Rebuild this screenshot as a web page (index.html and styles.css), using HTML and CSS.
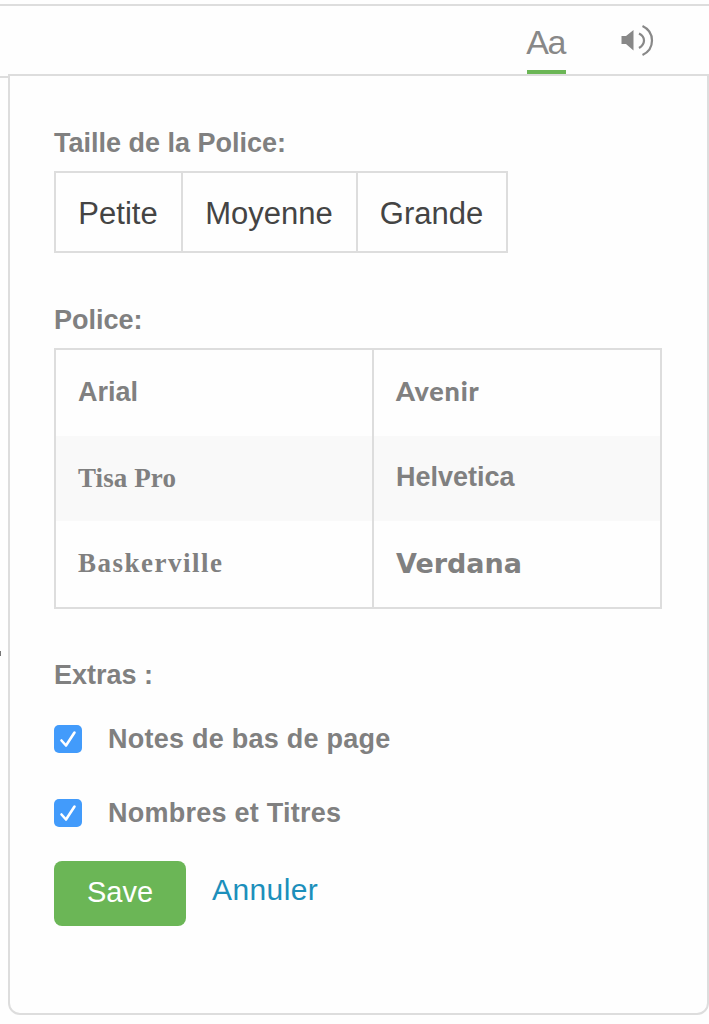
FILE: index.html
```html
<!DOCTYPE html>
<html lang="fr">
<head>
  <meta charset="UTF-8" />
  <title>Options de lecture</title>
  <link rel="stylesheet" href="styles.css">
</head>
<body>
  <header class="toolbar">
    <button type="button" class="tool active">Aa</button>
    <button type="button" class="tool sound" aria-label="Audio">
      <svg width="34" height="34" viewBox="0 0 34 34">
        <path d="M0.500 12h4.500l7.500-6v20.500l-7.500-6.500h-4.500z" fill="#888" />
        <path d="M18 9.500q5 2.500 5 7t-5 7.500M21.500 2q9.500 4.500 9.500 14.500t-9.500 14.500" fill="none" stroke="#888" stroke-width="2.200" />
      </svg>
    </button>
  </header>

  <form class="panel">
    <h4>Taille de la Police:</h4>
    <div class="sizes">
      <button type="button" class="size petite">Petite</button>
      <button type="button" class="size moyenne">Moyenne</button>
      <button type="button" class="size grande">Grande</button>
    </div>

    <h4>Police:</h4>
    <table class="fonts">
      <tr>
        <td class="arial">Arial</td>
        <td class="avenir">Avenir</td>
      </tr>
      <tr>
        <td class="tisa">Tisa Pro</td>
        <td class="helvetica">Helvetica</td>
      </tr>
      <tr>
        <td class="baskerville">Baskerville</td>
        <td class="verdana">Verdana</td>
      </tr>
    </table>

    <h4 class="extras">Extras :</h4>
    <label class="check">
      <input type="checkbox" checked />
      <svg class="box" width="28" height="28" viewBox="0 0 28 28">
        <path d="M7.500 15.500l4.500 5L20.500 7.500" />
      </svg>
      Notes de bas de page
    </label>
    <label class="check">
      <input type="checkbox" checked />
      <svg class="box" width="28" height="28" viewBox="0 0 28 28">
        <path d="M7.500 15.500l4.500 5L20.500 7.500" />
      </svg>
      Nombres et Titres
    </label>

    <div class="actions">
      <button type="submit" class="save">Save</button>
      <a href="#" class="cancel">Annuler</a>
    </div>
  </form>
</body>
</html>
```
FILE: styles.css
```css
* {
  box-sizing: border-box;
}
body {
  margin: 0;
  height: 1024px;
  padding-top: 4px;
  position: relative;
  overflow: hidden;
  background: #fefefe;
  color: #808080;
  font-family: "Liberation Sans", Arial, sans-serif;
}
button {
  border: 0;
  padding: 0;
  background: none;
  font-family: inherit;
}
/* edge of the text under the panel */
body::before {
  content: "";
  position: absolute;
  left: 0;
  top: 651px;
  width: 1px;
  height: 5px;
  background: #777;
}
.toolbar {
  display: flex;
  justify-content: flex-end;
  height: 74px;
  padding-right: 54px;
  border-top: 2px solid #ddd;
  border-bottom: 2px solid #ddd;
}
.tool {
  height: 68px;
  color: #888;
}
.tool.active {
  width: 39px;
  font-size: 34px;
  letter-spacing: -1.5px;
  text-indent: -2px;
  border-bottom: 4px solid #6bb656;
  padding-top: 8px;
}
.tool.sound {
  width: 34px;
  margin-left: 55px;
  padding-top: 4px;
}
.panel {
  position: relative;
  height: 941px;
  margin: -4px 0 0 8px;
  padding: 51px 45px 0 44px;
  background: #fefefe;
  border: 2px solid #ddd;
  border-radius: 0 0 12px 12px;
}
h4 {
  margin: 0;
  font-size: 27px;
  line-height: 32px;
  padding-bottom: 12px;
}
.sizes {
  display: flex;
  width: 454px;
  height: 82px;
  margin-bottom: 51px;
  border: 2px solid #ddd;
}
.size {
  color: #444;
  font-size: 31px;
  padding: 3px 1px 0 0;
}
.size + .size {
  border-left: 2px solid #ddd;
}
.petite {
  width: 125px;
}
.moyenne {
  width: 175px;
}
.grande {
  flex: 1;
}
.fonts {
  width: 608px;
  border: 2px solid #ddd;
  border-spacing: 0;
  table-layout: fixed;
  margin-bottom: 50px;
}
.fonts td {
  height: 85.5px;
  padding: 0 0 1px 22px;
  font-size: 27px;
  font-weight: bold;
}
.fonts td:first-child {
  width: 316px;
}
.fonts td + td {
  border-left: 2px solid #ddd;
}
.fonts tr:nth-child(even) {
  background: #f9f9f9;
}
.fonts .avenir {
  font-family: Lato, sans-serif;
  font-weight: 900;
  letter-spacing: 0.8px;
  padding-bottom: 5px;
}
.fonts .tisa {
  font-family: "Liberation Serif", serif;
  letter-spacing: 0.1px;
  padding-bottom: 0;
}
.fonts .baskerville {
  font-family: "Liberation Serif", serif;
  letter-spacing: 1.5px;
  padding-bottom: 0;
}
.fonts .verdana {
  font-family: "DejaVu Sans", sans-serif;
}
.extras {
  padding-bottom: 33px;
}
.check {
  display: flex;
  align-items: center;
  height: 32px;
  margin-bottom: 42px;
  font-size: 27px;
  font-weight: bold;
  letter-spacing: 0.25px;
}
.check input {
  display: none;
}
.box {
  margin: 0 26px 2px 0;
  background: #429bfb;
  border-radius: 5px;
}
.box path {
  fill: none;
  stroke: #fff;
  stroke-width: 2.6;
  stroke-linecap: round;
  stroke-linejoin: round;
}
.actions {
  display: flex;
  margin-top: -11px;
}
.save {
  width: 132px;
  height: 65px;
  padding-bottom: 1px;
  border-radius: 8px;
  background: #6bb656;
  color: #fff;
  font-size: 29px;
}
.cancel {
  margin-left: 26px;
  font-size: 30px;
  letter-spacing: 0.4px;
  line-height: 58px;
  color: #1c8fbb;
  text-decoration: none;
}
```
